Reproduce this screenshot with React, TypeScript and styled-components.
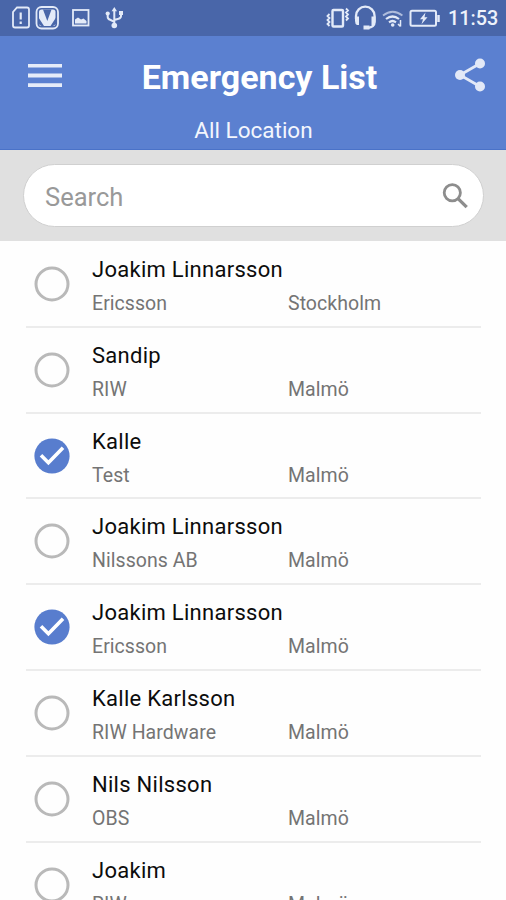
import React, { useState } from "react";
import styled, { createGlobalStyle } from "styled-components";

const GlobalStyle = createGlobalStyle`
  * { box-sizing: border-box; }
  html, body { margin: 0; padding: 0; background: #fefefe; }
  body { font-family: Roboto, "Liberation Sans", sans-serif; overflow: hidden; }
`;

const Screen = styled.div`
  width: 506px;
  height: 900px;
  overflow: hidden;
  display: flex;
  flex-direction: column;
  background: #fefefe;
`;

const StatusBar = styled.div`
  flex: none;
  height: 36px;
  padding-right: 2px;
  background: #4966a9;
  display: flex;
  color: #eef2fb;
  svg { display: block; flex: none; }
`;

const SystemStatus = styled.div`
  margin-left: auto;
  display: flex;
`;

const Clock = styled.span`
  width: 56px;
  font-size: 19.8px;
  font-weight: 500;
  line-height: 38px;
  white-space: nowrap;
`;

const Header = styled.header`
  flex: none;
  height: 114px;
  background: #5b80d0;
  border-bottom: 1px solid #4a72c8;
  display: grid;
  grid-template-columns: 92px 1fr 72px;
`;

const IconButton = styled.button<{ $left: number; $top: number }>`
  padding: ${(p) => p.$top}px 0 0 ${(p) => p.$left}px;
  border: 0;
  background: none;
  align-self: start;
  display: block;
  svg { display: block; }
`;

const Heading = styled.div`
  padding: 21px 7px 0 0;
  text-align: center;
  color: #fff;
`;

const Title = styled.h1`
  margin: 0;
  font-size: 34px;
  font-weight: 700;
  line-height: 40px;
  white-space: nowrap;
`;

const Subtitle = styled.div`
  margin: 19px 12px 0 0;
  font-size: 22.5px;
  line-height: 28px;
  color: #f3f6fd;
`;

const SearchArea = styled.div`
  flex: none;
  height: 91px;
  padding: 14px 22px 0 23px;
  background: #e0e0e0;
`;

const SearchBox = styled.label`
  height: 63px;
  border-radius: 32px;
  border: 1px solid #d0d0d0;
  background: #fff;
  display: flex;
  align-items: center;
  padding: 0 15px 0 21px;
`;

const SearchInput = styled.input`
  flex: 1;
  min-width: 0;
  height: 40px;
  padding: 2px 0 0;
  border: 0;
  outline: 0;
  background: none;
  font-family: inherit;
  font-size: 25.5px;
  color: #333;
  &::placeholder { color: #999; opacity: 1; }
`;

const List = styled.ul`
  margin: 0;
  padding: 1px 25px 0 26px;
  list-style: none;
`;

const Row = styled.li`
  height: 85.8px;
  border-bottom: 2px solid #ececec;
  padding: 13px 0 0 8px;
  display: grid;
  grid-template-columns: 58px 1fr;
`;

const Toggle = styled.button`
  padding: 11px 0 0;
  border: 0;
  background: none;
  display: block;
  align-self: start;
  svg { display: block; }
`;

const Name = styled.div`
  font-size: 22px;
  line-height: 30px;
  letter-spacing: 0.28px;
  color: #0c0c0c;
`;

const Details = styled.div`
  margin-top: 4px;
  display: grid;
  grid-template-columns: 196px 1fr;
  font-size: 19.5px;
  line-height: 30px;
  letter-spacing: 0.05px;
  color: #747474;
`;

type Contact = { name: string; company: string; city: string; selected?: boolean };

const contacts: Contact[] = [
  { name: "Joakim Linnarsson", company: "Ericsson", city: "Stockholm" },
  { name: "Sandip", company: "RIW", city: "Malmö" },
  { name: "Kalle", company: "Test", city: "Malmö", selected: true },
  { name: "Joakim Linnarsson", company: "Nilssons AB", city: "Malmö" },
  { name: "Joakim Linnarsson", company: "Ericsson", city: "Malmö", selected: true },
  { name: "Kalle Karlsson", company: "RIW Hardware", city: "Malmö" },
  { name: "Nils Nilsson", company: "OBS", city: "Malmö" },
  { name: "Joakim", company: "RIW", city: "Malmö" },
];

const NotificationIcons = () => (
  <svg width="130" height="36" fill="none" stroke="#e3eaf8" strokeWidth="1.8">
    <path d="M17 7.500h10a2 2 0 0 1 2 2v16a2 2 0 0 1-2 2H15a2 2 0 0 1-2-2V12z" />
    <path d="M20.700 12.500v7M20.700 21.500v2.400" strokeWidth="2.200" />
    <rect x="36.500" y="7" width="21.500" height="21.500" rx="5" />
    <rect x="39" y="9.500" width="16.500" height="16.500" rx="2.500" fill="#e3eaf8" stroke="none" />
    <path d="M43 9.500h8.500L47.300 21zM38.500 17.500L44 26h-2.500l-3-2zM56 17.500L50.500 26H53l3-2z" fill="#4966a9" stroke="none" />
    <rect x="73" y="10" width="15.500" height="15.500" />
    <path d="M75 23.500v-4l3-2 3 2 2.500-1 3 2.500v2.500z" fill="#e3eaf8" stroke="none" />
    <path d="M114.300 10v14.500M107.700 14v3q0 2 2.500 2.800l4.100 2M121 13v3q0 2-2.500 2.800l-4.200 1.200" strokeWidth="2" />
    <path d="M114.300 7l2.700 4.300h-5.400z" fill="#e3eaf8" stroke="none" />
    <circle cx="107.700" cy="13.500" r="2.100" fill="#e3eaf8" stroke="none" />
    <path d="M119 11h4v4h-4z" fill="#e3eaf8" stroke="none" />
    <circle cx="114.300" cy="25.500" r="2.800" fill="#e3eaf8" stroke="none" />
  </svg>
);

const SystemIcons = () => (
  <svg width="125" height="36" viewBox="323 0 125 36" fill="none" stroke="#e3eaf8" strokeWidth="2">
    <rect x="332.500" y="10" width="10.500" height="16.500" rx="1" strokeWidth="2.400" />
    <path d="M329.500 14l-2 2 2 2-2 2 2 2-2 2 2 2M346 8.500l2 2-2 2 2 2-2 2 2 2-2 2" strokeWidth="1.800" />
    <path d="M356 19v-3a9.300 9.300 0 0 1 18.600 0v6q0 5-7 6" strokeWidth="2.300" />
    <path d="M355 16.500h4v8.500h-2q-2-1-2-4zM375.500 16.500H371.500v8.500h2q2-1 2-4zM363.500 25.500h6v4h-6z" fill="#e3eaf8" stroke="none" />
    <path d="M383 15.500q9.700-7.500 19.400 0" strokeWidth="1.800" opacity=".65" />
    <path d="M386 19q6.500-5 13 0M389 22.300q3.500-2.600 7 0" strokeWidth="2.200" />
    <circle cx="392.700" cy="25" r="1.800" fill="#e3eaf8" stroke="none" />
    <path d="M400.500 20v6.500M398 24l2.500 2.500" strokeWidth="1.500" />
    <rect x="410.500" y="10.800" width="25.500" height="15" rx="1.500" />
    <path d="M438.500 15v7" strokeWidth="2.500" />
    <path d="M425.500 12.500l-5.500 6.800h3l-1.500 5 6-7h-3z" fill="#e3eaf8" stroke="none" />
  </svg>
);

const MenuIcon = () => (
  <svg width="34" height="24" fill="#e6ecf9">
    <path d="M0 0h34v3.600H0zM0 9.600h34v4H0zM0 19.300h34v3.600H0z" />
  </svg>
);

const ShareIcon = () => (
  <svg width="30" height="34" fill="#e3e9f7">
    <path d="M25 5.500L5 17l20 11.500" fill="none" stroke="#e3e9f7" strokeWidth="2.800" />
    <circle cx="25" cy="5.500" r="5" />
    <circle cx="5" cy="17" r="5" />
    <circle cx="25" cy="28.500" r="5" />
  </svg>
);

const SearchIcon = () => (
  <svg width="26" height="26" fill="none" stroke="#8d8d8d" strokeWidth="2.800">
    <circle cx="10.300" cy="9.800" r="8.100" />
    <path d="M16.300 15.800l8.400 8.400" strokeWidth="3.300" />
  </svg>
);

const CheckMark = ({ on }: { on: boolean }) => (
  <svg width="36" height="36" fill="none">
    {on ? (
      <>
        <circle cx="18" cy="18" r="17.600" fill="#587dce" />
        <path d="M7 17.300l7.400 7.500L29 9.800" stroke="#fff" strokeWidth="3.600" />
      </>
    ) : (
      <circle cx="18" cy="18" r="16" stroke="#b9b9b9" strokeWidth="3" />
    )}
  </svg>
);

export default function App() {
  const [selected, setSelected] = useState(contacts.map((c) => !!c.selected));
  const toggle = (index: number) =>
    setSelected((prev) => prev.map((v, i) => (i === index ? !v : v)));

  return (
    <Screen>
      <GlobalStyle />
      <StatusBar>
        <NotificationIcons />
        <SystemStatus>
          <SystemIcons />
          <Clock>11:53</Clock>
        </SystemStatus>
      </StatusBar>
      <Header>
        <IconButton $left={28} $top={28} aria-label="Menu"><MenuIcon /></IconButton>
        <Heading>
          <Title>Emergency List</Title>
          <Subtitle>All Location</Subtitle>
        </Heading>
        <IconButton $left={21} $top={22} aria-label="Share"><ShareIcon /></IconButton>
      </Header>
      <SearchArea>
        <SearchBox>
          <SearchInput placeholder="Search" />
          <SearchIcon />
        </SearchBox>
      </SearchArea>
      <List>
        {contacts.map((c, i) => (
          <Row key={i}>
            <Toggle aria-label={c.name} onClick={() => toggle(i)}>
              <CheckMark on={selected[i]} />
            </Toggle>
            <div>
              <Name>{c.name}</Name>
              <Details>
                <span>{c.company}</span>
                <span>{c.city}</span>
              </Details>
            </div>
          </Row>
        ))}
      </List>
    </Screen>
  );
}
